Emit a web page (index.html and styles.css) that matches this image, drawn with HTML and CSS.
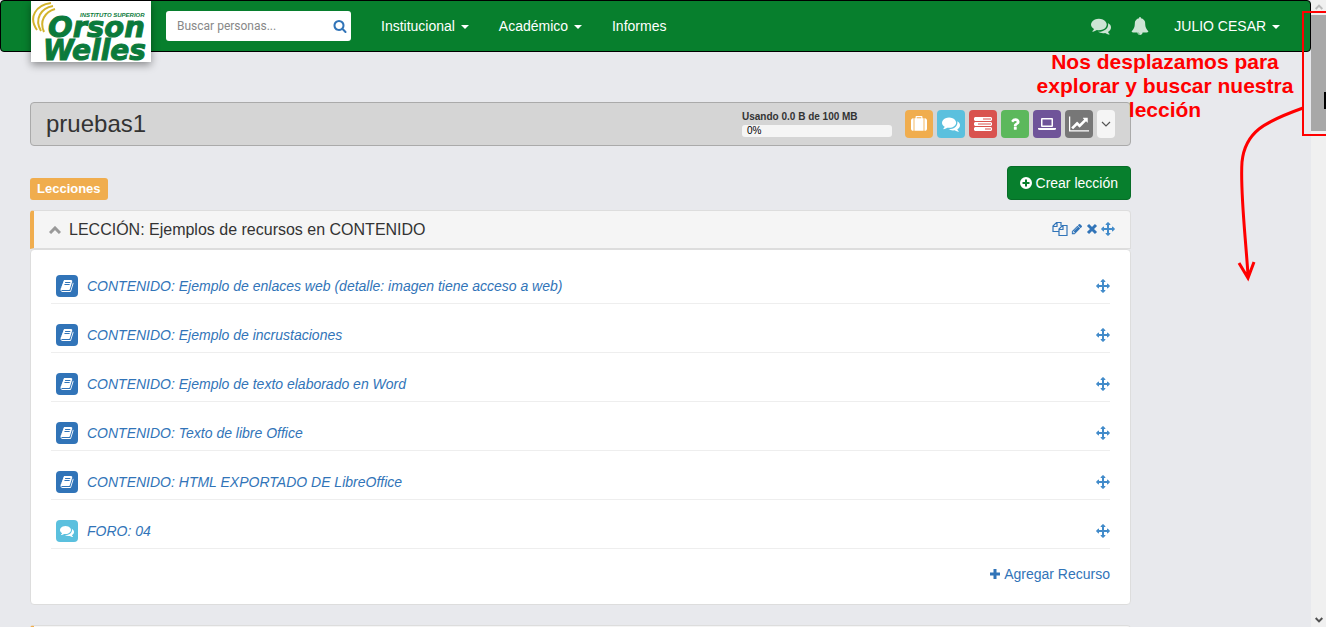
FILE: index.html
```html
<!DOCTYPE html>
<html lang="es">
<head>
<meta charset="utf-8">
<title>pruebas1</title>
<link rel="stylesheet" href="styles.css">
</head>
<body>
<svg class="sprite" aria-hidden="true">
  <symbol id="comments" viewBox="0 0 1792 1792"><path d="M1408 768q0 139-94 257t-256.500 186.500-353.500 68.500q-86 0-176-16-124 88-278 128-36 9-86 16h-3q-11 0-20.500-8t-11.500-21q-1-3-1-6.500t.5-6.500 2-6l2.500-5 3.500-5.500 4-5 4.500-5 4-4.500q5-6 23-25t26-29.500 22.500-29 25-38.500 20.500-44q-124-72-195-177t-71-224q0-139 94-257t256.500-186.500 353.500-68.500 353.500 68.500 256.500 186.500 94 257zm384 256q0 120-71 224.500t-195 176.500q10 24 20.500 44t25 38.500 22.500 29 26 29.500 23 25q1 1 4 4.500t4.500 5 4 5 3.500 5.500l2.500 5 2 6 .5 6.500-1 6.500q-3 14-13 22t-22 7q-50-7-86-16-154-40-278-128-90 16-176 16-271 0-472-132 58 4 88 4 161 0 309-45t264-129q125-92 192-212t67-254q0-77-23-152 129 71 204 178t75 230z"/></symbol>
  <symbol id="bell" viewBox="0 0 1792 1792"><path d="M912 1696q0-16-16-16-59 0-101.500-42.500t-42.500-101.500q0-16-16-16t-16 16q0 73 51.500 124.500t124.500 51.500q16 0 16-16zm816-288q0 52-38 90t-90 38h-448q0 106-75 181t-181 75-181-75-75-181h-448q-52 0-90-38t-38-90q50-42 91-88t85-119.500 74.500-158.500 50-206 19.500-260q0-152 117-282.500t307-158.500q-8-19-8-39 0-40 28-68t68-28 68 28 28 68q0 20-8 39 190 28 307 158.500t117 282.500q0 139 19.500 260t50 206 74.500 158.500 85 119.500 91 88z"/></symbol>
  <symbol id="search" viewBox="0 0 1792 1792"><path d="M1216 832q0-185-131.500-316.500t-316.500-131.500-316.500 131.500-131.500 316.500 131.500 316.500 316.500 131.500 316.500-131.500 131.500-316.500zm512 832q0 52-38 90t-90 38q-54 0-90-38l-343-342q-179 124-399 124-143 0-273.500-55.500t-225-150-150-225-55.500-273.500 55.500-273.500 150-225 225-150 273.500-55.500 273.500 55.500 225 150 150 225 55.500 273.500q0 220-124 399l343 343q37 37 37 90z"/></symbol>
  <symbol id="suitcase" viewBox="0 0 1792 1792"><path d="M640 256h512v-128h-512v128zm-352 0v1408h-64q-92 0-158-66t-66-158v-960q0-92 66-158t158-66h64zm1120 0v1408h-1024v-1408h128v-160q0-40 28-68t68-28h576q40 0 68 28t28 68v160h128zm384 224v960q0 92-66 158t-158 66h-64v-1408h64q92 0 158 66t66 158z"/></symbol>
  <symbol id="server" viewBox="0 0 18 14"><path d="M1 0h16l1 1v2l-1 1H1L0 3V1zM1 5h16l1 1v2l-1 1H1L0 8V6zM1 10h16l1 1v2l-1 1H1l-1-1v-2z"/><path class="server-line" d="M9 2h8M4 7h13M11 12h6"/></symbol>
  <symbol id="question" viewBox="0 0 1792 1792"><path d="M1088 1256v240q0 16-12 28t-28 12h-240q-16 0-28-12t-12-28v-240q0-16 12-28t28-12h240q16 0 28 12t12 28zm316-600q0 54-15.500 101t-35 76.500-55 59.500-57.500 43.500-61 35.500q-41 23-68.500 65t-27.500 67q0 17-12 32.500t-28 15.500h-240q-15 0-25.500-18.500t-10.500-37.500v-45q0-83 65-156.500t143-108.500q59-27 84-56t25-76q0-42-46.500-74t-107.500-32q-65 0-108 29-35 25-107 115-13 16-31 16-12 0-25-8l-164-125q-13-10-15.500-25t5.500-28q160-266 464-266 80 0 161 31t146 83 106 127.500 41 158.500z"/></symbol>
  <symbol id="laptop" viewBox="0 0 18 14"><path fill-rule="evenodd" d="M4 1h10q1 0 1 1v7q0 1-1 1H4q-1 0-1-1V2q0-1 1-1zm.5 1.500v6h9v-6zM0 11h18v1q0 1-2 1H2q-2 0-2-1z"/></symbol>
  <symbol id="chart" viewBox="0 0 2048 1792"><path d="M2048 1536v128h-2048v-1536h128v1408h1920zm-128-1248v435q0 21-19.500 29.500t-35.500-7.500l-121-121-633 633q-10 10-23 10t-23-10l-233-233-416 416-192-192 585-585q10-10 23-10t23 10l233 233 464-464-121-121q-16-16-7.500-35.500t29.500-19.500h435q14 0 23 9t9 23z"/></symbol>
  <symbol id="arrows" viewBox="0 0 1792 1792"><path d="M1792 896q0 26-19 45l-256 256q-19 19-45 19t-45-19-19-45v-128h-384v384h128q26 0 45 19t19 45-19 45l-256 256q-19 19-45 19t-45-19l-256-256q-19-19-19-45t19-45 45-19h128v-384h-384v128q0 26-19 45t-45 19-45-19l-256-256q-19-19-19-45t19-45l256-256q19-19 45-19t45 19 19 45v128h384v-384h-128q-26 0-45-19t-19-45 19-45l256-256q19-19 45-19t45 19l256 256q19 19 19 45t-19 45-45 19h-128v384h384v-128q0-26 19-45t45-19 45 19l256 256q19 19 19 45z"/></symbol>
  <symbol id="pencil" viewBox="0 0 1792 1792"><path d="M491 1536l91-91-235-235-91 91v107h128v128h107zm523-928q0-22-22-22-10 0-17 7l-542 542q-7 7-7 17 0 22 22 22 10 0 17-7l542-542q7-7 7-17zm-54-192l416 416-832 832h-416v-416zm683 96q0 53-37 90l-166 166-416-416 166-165q36-38 90-38 53 0 91 38l235 234q37 39 37 91z"/></symbol>
  <symbol id="book" viewBox="0 0 1792 1792"><path d="M1703 478q40 57 18 129l-275 906q-19 64-76.500 107.500t-122.500 43.500h-923q-77 0-148.500-53.500t-99.500-131.500q-24-67-2-127 0-4 3-27t4-37q1-8-3-21.500t-3-19.500q2-11 8-21t16.500-23.500 16.500-23.500q23-38 45-91.500t30-91.500q3-10 .5-30t-.5-28q3-11 17-28t17-23q21-36 42-92t25-90q1-9-2.500-32t.5-28q4-13 22-30.500t22-22.500q19-26 42.500-84.500t27.500-96.500q1-8-3-25.500t-2-26.500q2-8 9-18t18-23 17-21q8-12 16.500-30.500t15-35 16-36 19.500-32 26.500-23.500 36-11.500 47.500 5.500l-1 3q38-9 51-9h761q74 0 114 56t18 130l-274 906q-36 119-71.500 153.500t-128.500 34.500h-869q-27 0-38 15-11 16-1 43 24 70 144 70h923q29 0 56-15.500t35-41.500l300-987q7-22 5-57 38 15 59 43zm-1064 2q-4 13 2 22.500t20 9.500h608q13 0 25.500-9.500t16.500-22.500l21-64q4-13-2-22.500t-20-9.500h-608q-13 0-25.500 9.500t-16.500 22.500zm-83 256q-4 13 2 22.500t20 9.500h608q13 0 25.500-9.500t16.500-22.500l21-64q4-13-2-22.500t-20-9.500h-608q-13 0-25.500 9.500t-16.500 22.500z"/></symbol>
  <symbol id="copy" viewBox="0 0 16 16"><path class="line" d="M7 10.500H1V5l3.500-3.500H9V5M1 5.500h4V2M7 14.500V8l3.500-3.500H15v10zM7 8.500h4V5"/></symbol>
  <symbol id="times" viewBox="0 0 12 12"><path class="cross" d="M2 2l8 8M10 2l-8 8"/></symbol>
  <symbol id="plus" viewBox="0 0 12 12"><path class="cross" d="M6 1v10M1 6h10"/></symbol>
  <symbol id="plus-circle" viewBox="0 0 12 12"><path fill-rule="evenodd" d="M6 0a6 6 0 1 1 0 12A6 6 0 0 1 6 0zM5 2.500V5H2.500v2H5v2.500h2V7h2.500V5H7V2.500z"/></symbol>
  <symbol id="up" viewBox="0 0 12 8"><path class="cross" d="M1 7l5-5 5 5"/></symbol>
  <symbol id="down" viewBox="0 0 12 8"><path class="line" d="M2 2l4 4 4-4"/></symbol>
</svg>

<div class="page">
  <header class="navbar">
    <a class="logo" href="#" aria-label="Instituto Superior Orson Welles">
      <svg viewBox="0 0 120 61">
        <g class="waves"><path d="M20 2C5 4-3 16 6 29"/><path d="M22 5C10 7 3 18 10 30"/><path d="M24 8C14 11 8 20 13 31"/></g>
        <text class="logo-small" x="49" y="16">INSTITUTO SUPERIOR</text>
        <text class="logo-orson" x="17" y="36">Orson</text>
        <text class="logo-welles" x="12" y="59">Welles</text>
      </svg>
    </a>
    <form class="search">
      <input type="search" placeholder="Buscar personas..." aria-label="Buscar personas">
      <button type="button" aria-label="Buscar"><svg class="i14"><use href="#search"/></svg></button>
    </form>
    <nav class="menu">
      <a href="#">Institucional <span class="caret"></span></a>
      <a href="#">Académico <span class="caret"></span></a>
      <a href="#">Informes</a>
    </nav>
    <nav class="user">
      <a href="#" aria-label="Mensajes"><svg class="i20 pale"><use href="#comments"/></svg></a>
      <a href="#" aria-label="Notificaciones"><svg class="i18 pale"><use href="#bell"/></svg></a>
      <a class="name" href="#">JULIO CESAR <span class="caret"></span></a>
    </nav>
  </header>

  <main class="content">
    <section class="course">
      <h1>pruebas1</h1>
      <div class="quota"><strong>Usando 0.0 B de 100 MB</strong><div class="bar">0%</div></div>
      <div class="tools">
        <button class="orange" aria-label="Materiales"><svg class="i16"><use href="#suitcase"/></svg></button>
        <button class="sky" aria-label="Foros"><svg class="i18"><use href="#comments"/></svg></button>
        <button class="red" aria-label="Tareas"><svg class="i18"><use href="#server"/></svg></button>
        <button class="lime" aria-label="Cuestionarios"><svg class="i16"><use href="#question"/></svg></button>
        <button class="purple" aria-label="Aula virtual"><svg class="i18"><use href="#laptop"/></svg></button>
        <button class="gray" aria-label="Estadísticas"><svg class="i20"><use href="#chart"/></svg></button>
        <button class="more" aria-label="Más"><svg class="chev"><use href="#down"/></svg></button>
      </div>
    </section>

    <div class="actions">
      <span class="badge">Lecciones</span>
      <button class="create"><svg class="i12"><use href="#plus-circle"/></svg>Crear lección</button>
    </div>

    <section class="lesson">
      <header class="lesson-head">
        <svg class="chev"><use href="#up"/></svg>
        <h2>LECCIÓN: Ejemplos de recursos en CONTENIDO</h2>
        <div class="edit">
          <a href="#" aria-label="Copiar"><svg class="i16"><use href="#copy"/></svg></a>
          <a href="#" aria-label="Editar"><svg class="i12"><use href="#pencil"/></svg></a>
          <a href="#" aria-label="Eliminar"><svg class="i12"><use href="#times"/></svg></a>
          <a href="#" aria-label="Mover"><svg class="i14 move"><use href="#arrows"/></svg></a>
        </div>
      </header>
      <div class="lesson-body">
        <ul>
          <li><span class="kind"><svg class="i14"><use href="#book"/></svg></span><a href="#">CONTENIDO: Ejemplo de enlaces web (detalle: imagen tiene acceso a web)</a><svg class="i14 move"><use href="#arrows"/></svg></li>
          <li><span class="kind"><svg class="i14"><use href="#book"/></svg></span><a href="#">CONTENIDO: Ejemplo de incrustaciones</a><svg class="i14 move"><use href="#arrows"/></svg></li>
          <li><span class="kind"><svg class="i14"><use href="#book"/></svg></span><a href="#">CONTENIDO: Ejemplo de texto elaborado en Word</a><svg class="i14 move"><use href="#arrows"/></svg></li>
          <li><span class="kind"><svg class="i14"><use href="#book"/></svg></span><a href="#">CONTENIDO: Texto de libre Office</a><svg class="i14 move"><use href="#arrows"/></svg></li>
          <li><span class="kind"><svg class="i14"><use href="#book"/></svg></span><a href="#">CONTENIDO: HTML EXPORTADO DE LibreOffice</a><svg class="i14 move"><use href="#arrows"/></svg></li>
          <li><span class="kind sky"><svg class="i14"><use href="#comments"/></svg></span><a href="#">FORO: 04</a><svg class="i14 move"><use href="#arrows"/></svg></li>
        </ul>
        <a class="add" href="#"><svg class="i12"><use href="#plus"/></svg>Agregar Recurso</a>
      </div>
    </section>
    <section class="lesson"><header class="lesson-head"></header></section>
  </main>
</div>

<aside class="scroll">
  <svg class="chev faint"><use href="#up"/></svg>
  <div class="thumb"></div>
  <svg class="chev end"><use href="#up"/></svg>
</aside>

<div class="note">
  <p>Nos desplazamos para explorar y buscar nuestra lección</p>
  <svg viewBox="0 0 100 290"><path class="cursor" d="M99 92v17"/><path class="frame" d="M100 12H77v123h23"/><path class="arrow" d="M77 108C38 122 19 132 16 162C14 190 19 230 22 275M13 263l9 15 6-16"/></svg>
</div>
</body>
</html>
```
FILE: styles.css
```css
* { box-sizing: border-box; }
body {
  margin: 0;
  height: 100vh;
  display: flex;
  position: relative;
  overflow: hidden;
  background: #e8e9ed;
  color: #333;
  font: 14px/20px "Liberation Sans", Arial, sans-serif;
}
a { color: #3174b8; text-decoration: none; }
button { border: 0; padding: 0; font: inherit; cursor: pointer; }
svg { display: block; fill: currentColor; flex: none; }
.sprite { position: absolute; width: 0; height: 0; }
.line { fill: none; stroke: currentColor; stroke-width: 1.2; }
.cross { fill: none; stroke: currentColor; stroke-width: 3; }
.server-line { stroke: #d9534f; stroke-width: 1; }
.i12 { width: 12px; height: 12px; }
.i14 { width: 14px; height: 14px; }
.i16 { width: 16px; height: 16px; }
.i18 { width: 18px; height: 18px; }
.i20 { width: 20px; height: 20px; }
.chev { width: 12px; height: 8px; }
.page { flex: 1; min-width: 0; }

.navbar {
  display: flex;
  align-items: center;
  height: 52px;
  padding: 0 30px;
  background: #077f2d;
  border: 1px solid #000;
  border-radius: 4px;
  color: #fff;
}
.navbar a { color: #fff; }
.logo {
  align-self: flex-start;
  width: 120px;
  background: #fff;
  box-shadow: 0 3px 8px rgba(0, 0, 0, .4);
}
.logo text {
  font-family: "DejaVu Sans", Verdana, sans-serif;
  font-weight: bold;
  font-style: italic;
  fill: #0b7a3b;
  stroke: #0b7a3b;
}
.logo .logo-small { font-family: "Liberation Sans", Arial, sans-serif; font-size: 6px; stroke-width: 0; }
.logo-orson { font-size: 29px; stroke-width: 1; }
.logo-welles { font-size: 28px; stroke-width: 1; }
.waves { fill: none; stroke: #d3b32c; stroke-width: 2; }
.search {
  display: flex;
  align-items: center;
  width: 185px;
  height: 30px;
  margin-left: 15px;
  padding: 0 4px 0 11px;
  background: #fff;
  border-radius: 3px;
}
.search input {
  flex: 1;
  min-width: 0;
  padding: 0;
  border: 0;
  outline: 0;
  font: 12px/20px Roboto, "Liberation Sans", sans-serif;
}
.search input::placeholder { color: #888; }
.search button { background: none; color: #3174b8; }
.menu { display: flex; gap: 30px; margin-left: 30px; }
.caret {
  display: inline-block;
  margin-left: 2px;
  vertical-align: middle;
  border: 4px solid transparent;
  border-top-color: currentColor;
  border-bottom: 0;
}
.user { display: flex; align-items: center; gap: 20px; margin-left: auto; }
.user .name { margin-left: 5px; }
.pale { color: #cde5d5; }

.content { padding: 50px 180px 0 30px; }
.course {
  display: flex;
  align-items: center;
  height: 44px;
  padding: 0 15px;
  background: #d5d5d5;
  border: 1px solid #aaa;
  border-radius: 4px;
}
h1 { flex: 1; margin: 0; font-size: 24px; line-height: 28px; font-weight: normal; }
.quota { width: 150px; margin-right: 13px; font-size: 10px; line-height: 12px; }
.quota strong { display: block; white-space: nowrap; }
.bar {
  margin-top: 2px;
  padding-left: 5px;
  background: #f5f5f5;
  border-radius: 3px;
  color: #000;
}
.tools { display: flex; gap: 4px; }
.tools button {
  display: grid;
  place-items: center;
  width: 28px;
  height: 28px;
  border-radius: 4px;
  color: #fff;
}
.orange { background: #f0ad4e; }
.sky { background: #5bc0de; }
.red { background: #d9534f; }
.lime { background: #5cb85c; }
.purple { background: #6f5499; }
.gray { background: #777; }
.tools .more { width: 18px; background: #f5f5f5; color: #555; }

.actions {
  display: flex;
  align-items: flex-end;
  justify-content: space-between;
  margin: 20px 0 10px;
}
.badge {
  padding: 1px 7px;
  background: #f0ad4e;
  border-radius: 3px;
  color: #fff;
  font-size: 13px;
  font-weight: bold;
}
.create {
  display: flex;
  align-items: center;
  gap: 4px;
  height: 34px;
  padding: 0 12px;
  background: #077f2d;
  border: 1px solid #066d27;
  border-radius: 4px;
  color: #fff;
}

.lesson { margin-bottom: 20px; }
.lesson-head {
  display: flex;
  align-items: center;
  gap: 8px;
  height: 39px;
  padding: 0 15px;
  background: #f5f5f5;
  border: 1px solid #ddd;
  border-left: 4px solid #f0ad4e;
  border-radius: 4px 4px 0 0;
}
.lesson-head > .chev { color: #999; }
h2 { flex: 1; margin: 0; font-size: 16px; line-height: 20px; font-weight: normal; }
.edit { display: flex; align-items: center; gap: 3px; padding-bottom: 2px; }
.move { color: #428bca; }
.lesson-body {
  padding: 5px 20px 20px;
  background: #fff;
  border: 1px solid #ddd;
  border-radius: 4px;
}
ul { margin: 0; padding: 0; list-style: none; }
li {
  display: flex;
  align-items: center;
  padding: 20px 0 6px 5px;
  border-bottom: 1px solid #eee;
}
li a { flex: 1; margin-left: 9px; font-style: italic; }
.kind {
  display: grid;
  place-items: center;
  width: 22px;
  height: 22px;
  border-radius: 4px;
  color: #fff;
}
.kind:not(.sky) { background: #3174b8; }
.add {
  display: flex;
  align-items: center;
  justify-content: flex-end;
  gap: 3px;
  margin-top: 15px;
}

.scroll {
  display: flex;
  flex-direction: column;
  align-items: center;
  width: 15px;
  padding: 3px 0;
  background: #f0f0f0;
  color: #505050;
}
.thumb { width: 100%; height: 116px; margin-top: 4px; background: #a8a8a8; }
.faint { color: #bbb; }
.end { margin-top: auto; transform: rotate(180deg); }
.scroll .chev { width: 8px; }

/* Tutorial annotation floating over the page */
.note { position: absolute; top: 0; right: 0; color: #f00; pointer-events: none; }
.note p {
  position: absolute;
  top: 50px;
  right: 26px;
  width: 270px;
  margin: 0;
  font-size: 21px;
  line-height: 24px;
  font-weight: bold;
  text-align: center;
}
.note svg { width: 100px; height: 290px; fill: none; stroke: currentColor; }
.frame { stroke-width: 2; }
.arrow { stroke-width: 3; }
.cursor { stroke: #000; stroke-width: 2; }
```
